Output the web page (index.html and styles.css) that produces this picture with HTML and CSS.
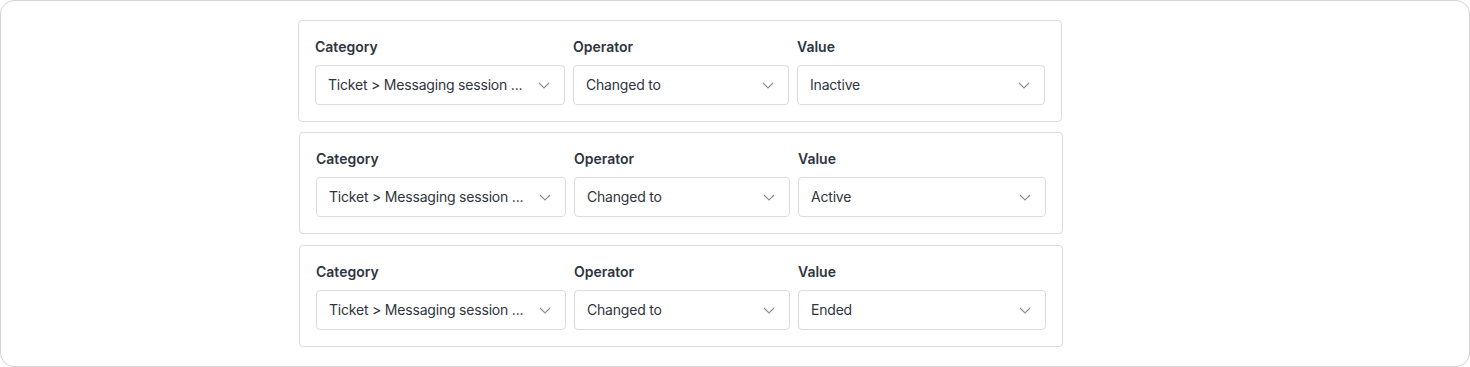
FILE: index.html
```html
<!DOCTYPE html>
<html lang="en">
<head>
  <meta charset="UTF-8" />
  <meta name="viewport" content="width=device-width, initial-scale=1.0"/>
  <title>Conditions</title>
  <link rel="stylesheet" href="styles.css">
</head>
<body>
  <div class="frame">
    <div class="lista">

      <div class="condicao primeira">
        <div class="campo">
          <label>Category</label>
          <div class="select"><span>Ticket &gt; Messaging session ...</span><svg width="12" height="7" viewBox="0 0 12 7"><path d="M1 1l5 5 5-5" fill="none" stroke="#8a8f96" stroke-width="1.1"/></svg></div>
        </div>
        <div class="campo">
          <label>Operator</label>
          <div class="select"><span>Changed to</span><svg width="12" height="7" viewBox="0 0 12 7"><path d="M1 1l5 5 5-5" fill="none" stroke="#8a8f96" stroke-width="1.1"/></svg></div>
        </div>
        <div class="campo">
          <label>Value</label>
          <div class="select"><span>Inactive</span><svg width="12" height="7" viewBox="0 0 12 7"><path d="M1 1l5 5 5-5" fill="none" stroke="#8a8f96" stroke-width="1.1"/></svg></div>
        </div>
      </div>

      <div class="condicao">
        <div class="campo">
          <label>Category</label>
          <div class="select"><span>Ticket &gt; Messaging session ...</span><svg width="12" height="7" viewBox="0 0 12 7"><path d="M1 1l5 5 5-5" fill="none" stroke="#8a8f96" stroke-width="1.1"/></svg></div>
        </div>
        <div class="campo">
          <label>Operator</label>
          <div class="select"><span>Changed to</span><svg width="12" height="7" viewBox="0 0 12 7"><path d="M1 1l5 5 5-5" fill="none" stroke="#8a8f96" stroke-width="1.1"/></svg></div>
        </div>
        <div class="campo">
          <label>Value</label>
          <div class="select"><span>Active</span><svg width="12" height="7" viewBox="0 0 12 7"><path d="M1 1l5 5 5-5" fill="none" stroke="#8a8f96" stroke-width="1.1"/></svg></div>
        </div>
      </div>

      <div class="condicao ultima">
        <div class="campo">
          <label>Category</label>
          <div class="select"><span>Ticket &gt; Messaging session ...</span><svg width="12" height="7" viewBox="0 0 12 7"><path d="M1 1l5 5 5-5" fill="none" stroke="#8a8f96" stroke-width="1.1"/></svg></div>
        </div>
        <div class="campo">
          <label>Operator</label>
          <div class="select"><span>Changed to</span><svg width="12" height="7" viewBox="0 0 12 7"><path d="M1 1l5 5 5-5" fill="none" stroke="#8a8f96" stroke-width="1.1"/></svg></div>
        </div>
        <div class="campo">
          <label>Value</label>
          <div class="select"><span>Ended</span><svg width="12" height="7" viewBox="0 0 12 7"><path d="M1 1l5 5 5-5" fill="none" stroke="#8a8f96" stroke-width="1.1"/></svg></div>
        </div>
      </div>

    </div>
  </div>
</body>
</html>
```

FILE: styles.css
```css
body {
  margin: 0;
  font-family: Inter, "Liberation Sans", sans-serif;
  background: #fff;
}

.frame {
  box-sizing: border-box;
  height: 367px;
  width: 1470px;
  border: 1px solid #d4d4d4;
  border-radius: 14px;
  padding: 19px 0 0 297px;
}

.lista {
  display: flex;
  flex-direction: column;
  align-items: flex-start;
  gap: 10px;
}

.condicao {
  box-sizing: border-box;
  width: 764px;
  display: grid;
  grid-template-columns: 250px 216px 1fr;
  gap: 8px;
  padding: 16px;
  border: 1px solid #dcdcdc;
  border-radius: 4px;
  margin-left: 1px;
}

.condicao.primeira {
  margin-left: 0;
}

.condicao.ultima {
  margin-top: 1px;
}

.campo label {
  display: block;
  font-size: 14px;
  font-weight: 600;
  line-height: 20px;
  color: #2d3540;
  margin-bottom: 8px;
}

.select {
  box-sizing: border-box;
  height: 40px;
  display: flex;
  align-items: center;
  justify-content: space-between;
  padding: 0 14px 0 12px;
  border: 1px solid #dcdcdc;
  border-radius: 4px;
  font-size: 14px;
  letter-spacing: -0.2px;
  color: #30353b;
}

.select span {
  white-space: nowrap;
  margin-top: -1px;
}
```
